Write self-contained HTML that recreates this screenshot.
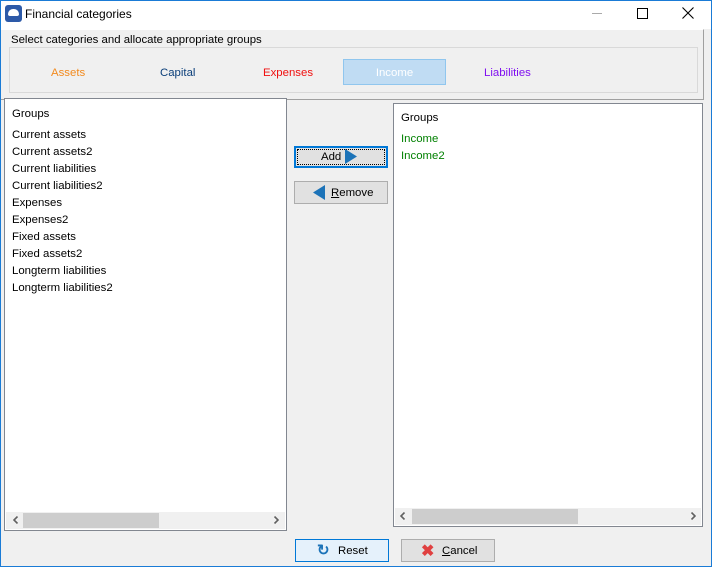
<!DOCTYPE html>
<html><head><meta charset="utf-8"><style>
*{box-sizing:border-box;margin:0;padding:0}
body{width:712px;height:567px;overflow:hidden;background:#f0f0f0;font-family:"Liberation Sans",Arial,sans-serif;font-size:11.4px;color:#000;position:relative}
.a{position:absolute}
.win{left:0;top:0;width:712px;height:567px;border:1px solid #1a7bd6}
.title{left:1px;top:1px;width:710px;height:28px;background:#fff}
.list{background:#fff;border:1px solid #828790}
.item{position:absolute;left:7px;white-space:nowrap}
.sb{background:#f0f0f0;height:17px}
.btn{background:#e1e1e1;border:1px solid #adadad}
</style></head><body>
<div class="a win"></div>
<div class="a title"></div>
<div class="a" style="left:5px;top:5px;width:17px;height:17px;background:#2d5aa8;border-radius:3px"></div>
<div class="a" style="left:8px;top:9px;width:11px;height:7px;background:#fff;border-radius:5px 5px 2px 2px"></div>
<div class="a" style="left:25px;top:7px;font-size:12px">Financial categories</div>
<div class="a" style="left:592px;top:13px;width:10px;height:1px;background:#aaa"></div>
<div class="a" style="left:637px;top:8px;width:11px;height:11px;border:1px solid #000"></div>
<svg class="a" style="left:682px;top:7px" width="12" height="12"><path d="M0.5 0.5L11.5 11.5M11.5 0.5L0.5 11.5" stroke="#000" stroke-width="1.1"/></svg>

<div class="a" style="left:1px;top:29px;width:703px;height:71px;border-right:1px solid #a0a0a0;border-bottom:1px solid #a0a0a0;border-top:1px solid #fff"></div>
<div class="a" style="left:11px;top:34px">Select categories and allocate appropriate groups</div>
<div class="a" style="left:9px;top:47px;width:689px;height:46px;border:1px solid #d9d9d9"></div>
<div class="a" style="left:51px;top:67px;color:#f28a1e">Assets</div>
<div class="a" style="left:160px;top:67px;color:#0b3f7a">Capital</div>
<div class="a" style="left:263px;top:67px;color:#f01010">Expenses</div>
<div class="a" style="left:343px;top:59px;width:103px;height:26px;background:#c0dcf3;border:1px solid #90c6ee;color:#fff;text-align:center;line-height:26px">Income</div>
<div class="a" style="left:484px;top:67px;color:#8010f0">Liabilities</div>

<div class="a list" style="left:4px;top:98px;width:283px;height:433px">
<div class="item" style="top:9px">Groups</div>
<div class="item" style="top:30px">Current assets</div>
<div class="item" style="top:47px">Current assets2</div>
<div class="item" style="top:64px">Current liabilities</div>
<div class="item" style="top:81px">Current liabilities2</div>
<div class="item" style="top:98px">Expenses</div>
<div class="item" style="top:115px">Expenses2</div>
<div class="item" style="top:132px">Fixed assets</div>
<div class="item" style="top:149px">Fixed assets2</div>
<div class="item" style="top:166px">Longterm liabilities</div>
<div class="item" style="top:183px">Longterm liabilities2</div>
<div class="a sb" style="left:1px;top:413px;width:279px"></div>
<div class="a" style="left:18px;top:414px;width:136px;height:15px;background:#cdcdcd"></div>
<svg class="a" style="left:8px;top:417px" width="6" height="8"><path d="M4.5 0.5L1 4L4.5 7.5" stroke="#606060" stroke-width="1.6" fill="none"/></svg>
<svg class="a" style="left:268px;top:417px" width="6" height="8"><path d="M1.5 0.5L5 4L1.5 7.5" stroke="#606060" stroke-width="1.6" fill="none"/></svg>
</div>

<div class="a btn" style="left:294px;top:146px;width:94px;height:22px;border:2px solid #0078d7;outline:1px dotted #000;outline-offset:-4px"></div>
<div class="a" style="left:321px;top:151px">Add</div>
<svg class="a" style="left:345px;top:149px" width="12" height="15"><path d="M0 0L12 7.5L0 15Z" fill="#1c73b8"/></svg>
<div class="a btn" style="left:294px;top:181px;width:94px;height:23px"></div>
<svg class="a" style="left:313px;top:185px" width="12" height="15"><path d="M12 0L0 7.5L12 15Z" fill="#1c73b8"/></svg>
<div class="a" style="left:331px;top:187px"><u>R</u>emove</div>

<div class="a list" style="left:393px;top:103px;width:310px;height:424px">
<div class="item" style="top:8px">Groups</div>
<div class="item" style="top:29px;color:#008000">Income</div>
<div class="item" style="top:46px;color:#008000">Income2</div>
<div class="a sb" style="left:1px;top:404px;width:306px"></div>
<div class="a" style="left:18px;top:405px;width:166px;height:15px;background:#cdcdcd"></div>
<svg class="a" style="left:6px;top:408px" width="6" height="8"><path d="M4.5 0.5L1 4L4.5 7.5" stroke="#606060" stroke-width="1.6" fill="none"/></svg>
<svg class="a" style="left:296px;top:408px" width="6" height="8"><path d="M1.5 0.5L5 4L1.5 7.5" stroke="#606060" stroke-width="1.6" fill="none"/></svg>
</div>

<div class="a btn" style="left:295px;top:539px;width:94px;height:23px;background:#e5f1fb;border-color:#0078d7"></div>
<div class="a" style="left:317px;top:541px;color:#1c73b8;font-weight:bold;font-size:15px">↻</div>
<div class="a" style="left:338px;top:545px">Reset</div>
<div class="a btn" style="left:401px;top:539px;width:94px;height:23px"></div>
<div class="a" style="left:421px;top:541px;color:#e04040;font-weight:bold;font-size:16px">✖</div>
<div class="a" style="left:442px;top:545px"><u>C</u>ancel</div>
</body></html>
